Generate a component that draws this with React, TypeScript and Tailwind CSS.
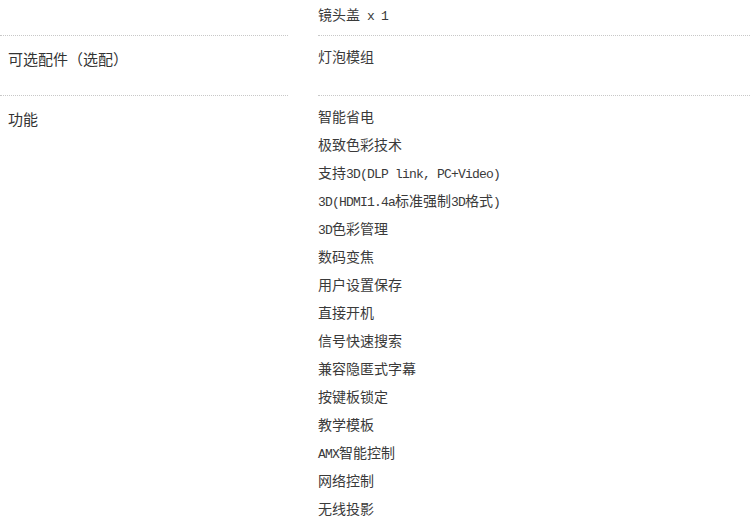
import React from "react";

const items = [
  "智能省电",
  "极致色彩技术",
  "支持3D(DLP link, PC+Video)",
  "3D(HDMI1.4a标准强制3D格式)",
  "3D色彩管理",
  "数码变焦",
  "用户设置保存",
  "直接开机",
  "信号快速搜索",
  "兼容隐匿式字幕",
  "按键板锁定",
  "教学模板",
  "AMX智能控制",
  "网络控制",
  "无线投影",
];

function Val({ text }: { text: string }) {
  const parts = text.split(/([\x20-\x7e]+)/).filter((p) => p.length > 0);
  return (
    <div className="h-[28px] leading-[28px] whitespace-nowrap overflow-visible">
      {parts.map((p, i) =>
        /^[\x20-\x7e]+$/.test(p) ? (
          <span
            key={i}
            className="font-['Liberation_Mono',monospace] text-[13px] tracking-[-0.8px] leading-[10px] whitespace-pre"
          >
            {p}
          </span>
        ) : (
          <span key={i} className="leading-[10px]">
            {p}
          </span>
        )
      )}
    </div>
  );
}

export default function App() {
  const label =
    "pl-2 text-[15px] leading-[20px] text-[#333] font-['Noto_Sans_CJK_SC',sans-serif] border-b border-dotted border-[#c8c8c8]";
  const value =
    "text-[14px] leading-[28px] text-[#3a3a3a] font-['Noto_Sans_CJK_SC',sans-serif] border-b border-dotted border-[#c8c8c8]";
  return (
    <div className="w-[750px] h-[527px] overflow-hidden bg-white">
      <div className="grid grid-cols-[288px_432px] gap-x-[30px]">
        <div className={label}></div>
        <div className={`${value} pt-0 pb-[7px]`}>
          <Val text="镜头盖 x 1" />
        </div>

        <div className={`${label} pt-[13px] pb-[26px]`}>可选配件（选配）</div>
        <div className={`${value} pt-[6px] pb-[25px]`}>
          <Val text="灯泡模组" />
        </div>

        <div className={`${label} pt-[13px] border-b-0`}>功能</div>
        <div className={`${value} pt-[6px] border-b-0 flex flex-col`}>
          {items.map((t) => (
            <Val key={t} text={t} />
          ))}
        </div>
      </div>
    </div>
  );
}
